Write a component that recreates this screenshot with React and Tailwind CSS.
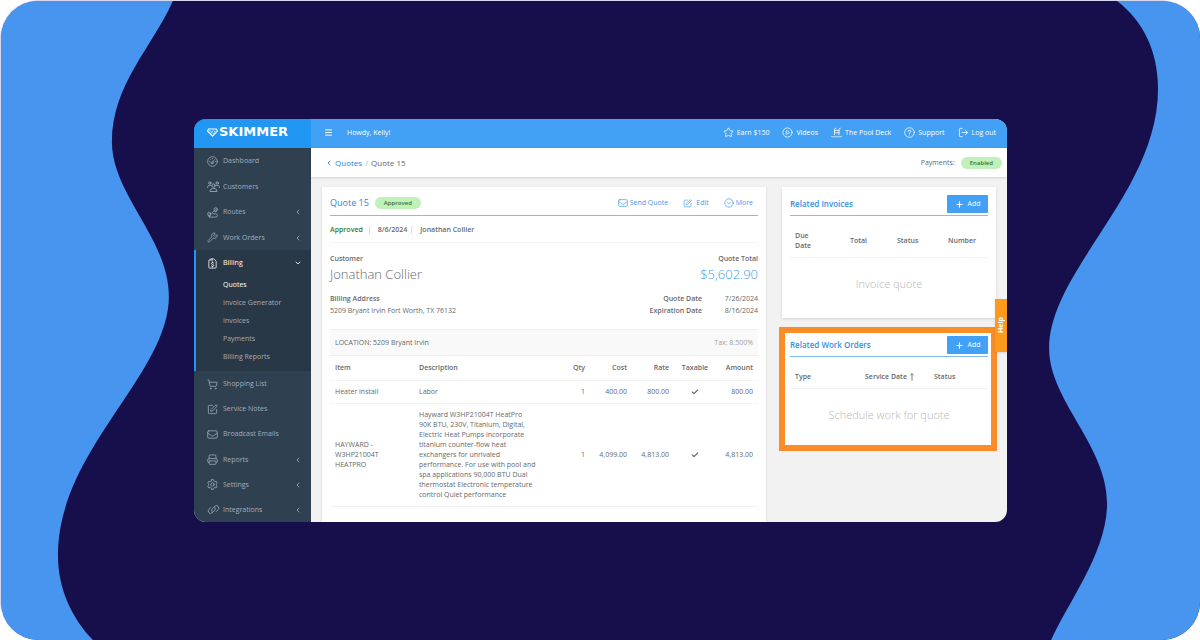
import React from "react";
import {
  Wrench,
  ShoppingCart,
  SquarePen,
  Star,
  CirclePlay,
  LogOut,
  Menu,
  ChevronLeft,
  ChevronDown,
  Plus,
  Check,
  CircleChevronDown,
  MoveUp,
} from "lucide-react";

function Glyph({ children, className }) {
  return (
    <svg
      viewBox="0 0 24 24"
      fill="none"
      stroke="currentColor"
      strokeWidth="1.7"
      strokeLinecap="round"
      strokeLinejoin="round"
      className={className}
      aria-hidden="true"
    >
      {children}
    </svg>
  );
}

const GaugeIcon = (p) => (
  <Glyph {...p}>
    <circle cx="12" cy="12" r="10.5" />
    <circle cx="11" cy="15" r="2.2" />
    <path d="M12.4 13.2 16.5 8" />
    <path d="M6 12h.1M8 8h.1M12 6h.1M18 12h.1" strokeWidth="2" />
  </Glyph>
);

const PeopleIcon = (p) => (
  <svg
    viewBox="0 0 28 24"
    fill="none"
    stroke="currentColor"
    strokeWidth="1.9"
    strokeLinecap="round"
    strokeLinejoin="round"
    className={p.className}
    aria-hidden="true"
  >
    <circle cx="14" cy="10" r="3.6" />
    <circle cx="6" cy="4.5" r="2.6" />
    <circle cx="22" cy="4.5" r="2.6" />
    <path d="M6.5 22c0-4 3-6 7.500-6s7.500 2 7.500 6z" />
    <path d="M1 14c0-3 2-4.500 5-4.500 1 0 1.800.2 2.500.6M27 14c0-3-2-4.500-5-4.500-1 0-1.800.2-2.500.6" />
  </svg>
);

const RouteIcon = (p) => (
  <Glyph {...p}>
    <circle cx="5" cy="15" r="3.600" />
    <path d="M5 22h14a3.500 3.500 0 0 0 0-7h-4a3 3 0 0 1 0-6" />
    <circle cx="19" cy="5" r="3.600" />
    <path d="M5 15h.1M19 5h.1M2.500 18 5 22l2.500-4M16.500 8l2.500 3.500L21.500 8" />
  </Glyph>
);

const BillIcon = (p) => (
  <Glyph {...p}>
    <path d="M7 5V3.500A1.500 1.500 0 0 1 8.500 2H15l5 5v13.500a1.500 1.500 0 0 1-1.500 1.500h-13A1.500 1.500 0 0 1 4 20.500V5.500A1.500 1.500 0 0 1 5.500 4H7" />
    <path d="M14.500 11c-.6-.8-1.500-1-2.500-1-1.400 0-2.400.8-2.400 2 0 2.800 5 1.400 5 4.200 0 1.200-1.100 2-2.600 2-1 0-2-.3-2.600-1.100M12 8.500V10M12 18.200v1.500" />
    <path d="M11 2v4" />
  </Glyph>
);

const EnvelopeIcon = (p) => (
  <Glyph {...p}>
    <rect x="1.500" y="4" width="21" height="16" rx="2.500" />
    <path d="m2 9 7.500 5.500a4 4 0 0 0 5 0L22 9" />
  </Glyph>
);

const PrinterIcon = (p) => (
  <Glyph {...p}>
    <path d="M4.500 10V4.500A2.500 2.500 0 0 1 7 2h10a2.500 2.500 0 0 1 2.500 2.500V10" />
    <path d="M4.500 18H3a1.500 1.500 0 0 1-1.500-1.500V13a3 3 0 0 1 3-3h15a3 3 0 0 1 3 3v3.500A1.500 1.500 0 0 1 21 18h-1.500" />
    <rect x="4.500" y="15" width="15" height="7.500" rx="1.500" />
  </Glyph>
);

const GearIcon = (p) => (
  <Glyph {...p}>
    <path d="M9.800 1.500h4.400l.8 3.300 2 1.200 3.200-1 2.200 3.900-2.400 2.200v2.200l2.400 2.200-2.200 3.900-3.200-1-2 1.200-.8 3.100H9.800L9 19.600l-2-1.200-3.200 1-2.200-3.900L4 13.300v-2.200L1.600 8.900 3.800 5 7 6l2-1.200z" />
    <circle cx="12" cy="12.200" r="3.800" />
  </Glyph>
);

const LinkIcon = (p) => (
  <svg
    viewBox="0 0 28 24"
    fill="none"
    stroke="currentColor"
    strokeWidth="1.800"
    strokeLinecap="round"
    className={p.className}
    aria-hidden="true"
  >
    <path d="M11 16.500a5 5 0 0 1 .6-6.500l4.800-4.800a5.200 5.200 0 0 1 7.500 0 5.200 5.200 0 0 1 0 7.400l-3.600 3.600" />
    <path d="M17 7.500a5 5 0 0 1-.6 6.500l-4.800 4.800a5.200 5.200 0 0 1-7.500 0 5.200 5.200 0 0 1 0-7.400l3.600-3.600" />
  </svg>
);

const PoolIcon = (p) => (
  <Glyph {...p}>
    <path d="M7.500 17V5.500A3 3 0 0 1 10.500 2.500M17.500 17V5.500a3 3 0 0 1 3-3M7.500 7.500h10M7.500 12.500h10" />
    <path d="M1 20.500c1.800 1.500 3.700 1.500 5.500 0 1.800 1.500 3.700 1.500 5.500 0 1.800 1.500 3.700 1.500 5.500 0 1.800 1.500 3.700 1.500 5.500 0" />
  </Glyph>
);

const HelpIcon = (p) => (
  <Glyph {...p}>
    <circle cx="12" cy="12" r="10.500" />
    <path d="M9 9.500A2.500 2.500 0 0 1 11.500 7h1a2.500 2.500 0 0 1 1.300 4.700L12 13v1M12 17.200h.1" />
  </Glyph>
);

function LogoMark() {
  return (
    <svg
      viewBox="0 0 30 24"
      fill="none"
      stroke="currentColor"
      strokeWidth="3"
      strokeLinejoin="round"
      className="h-[9px] w-[11px]"
      aria-hidden="true"
    >
      <path d="M4 2.500h22l2.500 6L15 22 1.500 8.500z" />
      <path d="M5 8.500c2-2 3.500-2 5 0s3.500 2 5 0 3.500-2 5 0 3.500 1.500 5 0M9 13.500c2-1.500 4-1.500 6 0s4 1 6 0" strokeWidth="2" />
    </svg>
  );
}

const TOP = [
  { label: "Dashboard", icon: GaugeIcon },
  { label: "Customers", icon: PeopleIcon, wide: true },
  { label: "Routes", icon: RouteIcon, more: true },
  { label: "Work Orders", icon: Wrench, more: true },
];
const BILLING = ["Quotes", "Invoice Generator", "Invoices", "Payments", "Billing Reports"];
const BOTTOM = [
  { label: "Shopping List", icon: ShoppingCart },
  { label: "Service Notes", icon: SquarePen },
  { label: "Broadcast Emails", icon: EnvelopeIcon },
  { label: "Reports", icon: PrinterIcon, more: true },
  { label: "Settings", icon: GearIcon, more: true },
  { label: "Integrations", icon: LinkIcon, more: true, wide: true },
];

function NavItem({ label, icon: Icon, more, wide }) {
  return (
    <a href="#" className="flex flex-1 items-center pt-px pr-[9px] pl-[13px] text-[#a3adb8]">
      <span className="flex w-4">
        <Icon className={wide ? "h-[11px] w-[13px]" : "size-[11px]"} strokeWidth={1.7} />
      </span>
      <span className="flex-1">{label}</span>
      {more && <ChevronLeft className="size-2" strokeWidth={2.5} />}
    </a>
  );
}

function Sidebar() {
  return (
    <aside className="flex w-[117px] shrink-0 flex-col bg-[#2f4050]">
      <a href="#" className="flex h-[29px] shrink-0 items-center gap-px bg-[#2196f3] pb-[3px] pl-[13px] text-white">
        <LogoMark />
        <span className="font-['DejaVu_Sans',sans-serif] text-[13px] leading-3 font-bold">SKIMMER</span>
      </a>
      <nav className="flex flex-1 flex-col">
        <div className="flex h-[102px] flex-col">
          {TOP.map((i) => (
            <NavItem key={i.label} {...i} />
          ))}
        </div>
        <div className="border-l-2 border-[#2196f3] bg-[#293846] pb-[5px]">
          <a href="#" className="flex h-[26px] items-center pr-[9px] pl-[11px] text-white">
            <span className="flex w-4">
              <BillIcon className="size-[11px]" />
            </span>
            <span className="flex-1">Billing</span>
            <ChevronDown className="size-2" strokeWidth={2.5} />
          </a>
          {BILLING.map((b) => (
            <a
              key={b}
              href="#"
              className={
                b === "Quotes"
                  ? "flex h-[18px] items-center pl-[27px] text-white"
                  : "flex h-[18px] items-center pl-[27px] text-[#a3adb8]"
              }
            >
              {b}
            </a>
          ))}
        </div>
        <div className="flex flex-1 flex-col">
          {BOTTOM.map((i) => (
            <NavItem key={i.label} {...i} />
          ))}
        </div>
      </nav>
    </aside>
  );
}

const LINKS = [
  { label: "Earn $150", icon: Star },
  { label: "Videos", icon: CirclePlay },
  { label: "The Pool Deck", icon: PoolIcon },
  { label: "Support", icon: HelpIcon },
  { label: "Log out", icon: LogOut },
];

function TopBar() {
  return (
    <header className="flex h-[29px] shrink-0 items-center bg-[#42a1f5] pb-[2px] pl-[13px] pr-[11px] text-white">
      <button type="button" aria-label="Toggle menu">
        <Menu className="size-[9px]" strokeWidth={2.5} />
      </button>
      <span className="ml-[14px] flex-1">Howdy, Kelly!</span>
      <nav className="flex gap-[13px]">
        {LINKS.map(({ label, icon: Icon }) => (
          <a key={label} href="#" className="flex items-center gap-[3px]">
            <Icon className="size-[11px]" strokeWidth={1.7} />
            {label}
          </a>
        ))}
      </nav>
    </header>
  );
}

function Pill({ children }) {
  return (
    <span className="flex h-3 items-center rounded-full bg-[#bff2b8] px-[9px] text-[6px] font-semibold text-[#38703a]">
      {children}
    </span>
  );
}

const ITEMS = [
  { item: "Heater install", desc: "Labor", qty: "1", cost: "400.00", rate: "800.00", amount: "800.00" },
  {
    item: "HAYWARD -\nW3HP21004T\nHEATPRO",
    desc: "Hayward W3HP21004T HeatPro\n90K BTU, 230V, Titanium, Digital,\nElectric Heat Pumps incorporate\ntitanium counter-flow heat\nexchangers for unrivaled\nperformance. For use with pool and\nspa applications 90,000 BTU Dual\nthermostat Electronic temperature\ncontrol Quiet performance",
    qty: "1",
    cost: "4,099.00",
    rate: "4,813.00",
    amount: "4,813.00",
  },
];

function QuoteCard() {
  return (
    <section className="min-w-0 flex-1 bg-white px-2 shadow-sm">
      <div className="flex h-[29px] items-center border-b border-[#7fbdf2] pt-1 pr-[5px] text-[#2a86dc]">
        <h1 className="mr-[6px] text-[9px] font-medium">Quote 15</h1>
        <Pill>Approved</Pill>
        <div className="ml-auto flex gap-[15px] text-[#429bee]">
          <button type="button" className="flex items-center gap-[2px]">
            <EnvelopeIcon className="size-[10px]" />
            Send Quote
          </button>
          <button type="button" className="flex items-center gap-1">
            <SquarePen className="size-[9px]" strokeWidth={1.7} />
            Edit
          </button>
          <button type="button" className="flex items-center gap-[2px]">
            <CircleChevronDown className="size-[10px]" strokeWidth={1.7} />
            More
          </button>
        </div>
      </div>
      <div className="flex h-[27px] items-center border-b border-[#f4f4f4] pt-px font-semibold">
        <span className="border-r border-[#dddddd] pr-[6px] leading-2 text-[#2f7a33]">Approved</span>
        <span className="border-r border-[#dddddd] pr-1 pl-2 leading-2">8/6/2024</span>
        <span className="pl-2 leading-2">Jonathan Collier</span>
      </div>
      <div className="flex justify-between pt-[11px]">
        <div>
          <div className="font-semibold">Customer</div>
          <div className="mt-[2px] text-[13px] leading-4 font-light">Jonathan Collier</div>
        </div>
        <div className="text-right">
          <div className="font-semibold">Quote Total</div>
          <div className="mt-[2px] text-[13px] leading-4 font-light text-[#3b98ee]">$5,602.90</div>
        </div>
      </div>
      <div className="mt-[11px] flex justify-between leading-3">
        <div>
          <div className="font-semibold">Billing Address</div>
          <div>5209 Bryant Irvin Fort Worth, TX 76132</div>
        </div>
        <dl className="grid grid-cols-[auto_56px] text-right">
          <dt className="font-semibold">Quote Date</dt>
          <dd>7/26/2024</dd>
          <dt className="font-semibold">Expiration Date</dt>
          <dd>8/16/2024</dd>
        </dl>
      </div>
      <div className="mt-3 flex h-[27px] items-center justify-between border-y border-[#eeeeee] bg-[#f9f9f9] px-[5px] pt-px">
        <span>LOCATION: 5209 Bryant Irvin</span>
        <span className="text-[#a0a0a0]">Tax: 8.500%</span>
      </div>
      <table className="w-full table-fixed text-right">
        <thead>
          <tr className="h-6 border-b border-[#f2f2f2]">
            <th className="w-[84px] px-[5px] pt-px text-left font-semibold">Item</th>
            <th className="px-[5px] pt-px text-left font-semibold">Description</th>
            <th className="w-[30px] px-[5px] pt-px font-semibold">Qty</th>
            <th className="w-[42px] px-[5px] pt-px font-semibold">Cost</th>
            <th className="w-[42px] px-[5px] pt-px font-semibold">Rate</th>
            <th className="w-[42px] pt-px text-center font-semibold">Taxable</th>
            <th className="w-[42px] px-[5px] pt-px font-semibold">Amount</th>
          </tr>
        </thead>
        <tbody>
          {ITEMS.map((r) => (
            <tr key={r.item} className="border-b border-[#f2f2f2]">
              <td className="px-[5px] py-[6px] text-left whitespace-pre-line">{r.item}</td>
              <td className="px-[5px] py-[6px] text-left whitespace-pre-line">{r.desc}</td>
              <td className="px-[5px]">{r.qty}</td>
              <td className="px-[5px]">{r.cost}</td>
              <td className="px-[5px]">{r.rate}</td>
              <td>
                <Check className="mx-auto size-2" strokeWidth={3.5} aria-label="Yes" />
              </td>
              <td className="px-[5px]">{r.amount}</td>
            </tr>
          ))}
        </tbody>
      </table>
    </section>
  );
}

function PanelHead({ title }) {
  return (
    <div className="flex items-start justify-between border-b border-[#7fbdf2] pb-[2px]">
      <h2 className="text-[8px] leading-[18px] font-semibold text-[#3390e8]">{title}</h2>
      <button
        type="button"
        className="flex h-[18px] w-[41px] items-center justify-center gap-1 rounded-[1px] bg-[#42a1f5] text-white"
      >
        <Plus className="size-[9px]" strokeWidth={3} />
        Add
      </button>
    </div>
  );
}

function Related() {
  return (
    <div className="w-[218px] shrink-0">
      <section className="mr-px ml-[3px] h-[131px] bg-white px-2 pt-2 shadow">
        <PanelHead title="Related Invoices" />
        <table className="w-full table-fixed text-left">
          <thead>
            <tr className="h-[41px] border-b border-[#f2f2f2]">
              <th className="w-[54px] pr-5 pl-[5px] pt-[9px] font-semibold">Due Date</th>
              <th className="w-[47px] pl-[6px] pt-[9px] font-semibold">Total</th>
              <th className="w-[51px] pl-[6px] pt-[9px] font-semibold">Status</th>
              <th className="pl-[6px] pt-[9px] font-semibold">Number</th>
            </tr>
          </thead>
        </table>
        <p className="mt-[18px] text-center text-[11px] leading-4 font-light text-[#b8b8b8]">Invoice quote</p>
      </section>
      <section className="mt-[9px] h-[124px] border-6 border-[#fb8c27] bg-white pt-[3px] pr-[3px] pl-[5px]">
        <PanelHead title="Related Work Orders" />
        <table className="w-full table-fixed text-left">
          <thead>
            <tr className="h-[31px] border-b border-[#f2f2f2]">
              <th className="w-[69px] pl-[5px] pt-[9px] font-semibold">Type</th>
              <th className="w-[69px] pl-[6px] pt-[9px] font-semibold">
                <span className="flex items-center gap-px">
                  Service Date
                  <MoveUp className="size-2" strokeWidth={2.5} />
                </span>
              </th>
              <th className="pl-[6px] pt-[9px] font-semibold">Status</th>
            </tr>
          </thead>
        </table>
        <p className="mt-[18px] text-center text-[11px] leading-4 font-light text-[#b8b8b8]">
          Schedule work for quote
        </p>
      </section>
    </div>
  );
}

function Backdrop() {
  return (
    <svg
      viewBox="0 0 1200 640"
      preserveAspectRatio="none"
      className="absolute inset-0 h-full w-full"
      fill="#4795ee"
      aria-hidden="true"
    >
      <path d="M0 0H172C151 47 111 84 111 141C111 194 168 238 168 296C168 374 57 450 57 555C57 590 72 619 92 640H0Z" />
      <path d="M1200 0H1117C1143 20 1158 50 1158 88C1158 192 1049 270 1049 348C1049 400 1107 445 1107 503C1107 552 1068 602 1051 640H1200Z" />
    </svg>
  );
}

export default function App() {
  return (
    <div className="bg-white">
      <div className="relative flex min-h-screen overflow-hidden rounded-[38px] border-t border-l border-[#d5d8ec] bg-[#160f4c] bg-clip-padding pt-[118px] pr-[193px] pb-[118px] pl-[193px] font-['Open_Sans',sans-serif] text-[7px] leading-[10px] text-[#65696c]">
        <Backdrop />
        <div className="relative flex flex-1 overflow-hidden rounded-xl bg-[#f2f2f2]">
          <Sidebar />
          <div className="flex min-w-0 flex-1 flex-col">
            <TopBar />
            <div className="flex h-[29px] shrink-0 items-center bg-white pr-[5px] pl-[14px] shadow-sm">
              <nav aria-label="Breadcrumb" className="flex flex-1 items-center gap-[3px] text-[8px]">
                <a href="#" className="flex items-center gap-[2px] text-[#2a86dc]">
                  <ChevronLeft className="size-2" strokeWidth={2.5} />
                  Quotes
                </a>
                <span className="text-[#b0b0b0]">/</span>
                <span>Quote 15</span>
              </nav>
              <span className="mr-[6px]">Payments:</span>
              <Pill>Enabled</Pill>
            </div>
            <main className="flex flex-1 gap-[13px] pt-[10px] pr-[10px] pl-[11px]">
              <QuoteCard />
              <Related />
            </main>
          </div>
          <button
            type="button"
            className="absolute top-[180px] right-0 flex h-[53px] w-3 items-center justify-center bg-[#fb9a1c] font-bold text-white shadow"
          >
            <span className="rotate-180 [writing-mode:vertical-rl]">Help</span>
          </button>
        </div>
      </div>
    </div>
  );
}
